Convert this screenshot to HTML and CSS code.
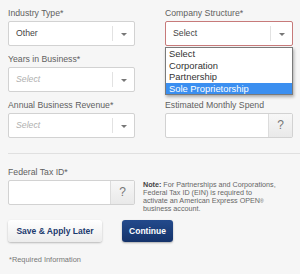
FILE: index.html
```html
<!DOCTYPE html>
<html lang="en">
<head>
    <meta charset="UTF-8">
    <meta name="viewport" content="width=device-width, initial-scale=1.0">
    <title>Business Information</title>
    <link rel="stylesheet" href="styles.css">
</head>
<body>
    <form class="business-form">
        <div class="columns">
            <div class="column">
                <div class="field">
                    <label>Industry Type*</label>
                    <div class="select-box">
                        <span class="value">Other</span>
                        <span class="arrow"></span>
                    </div>
                </div>
                <div class="field">
                    <label>Years in Business*</label>
                    <div class="select-box">
                        <span class="value placeholder">Select</span>
                        <span class="arrow"></span>
                    </div>
                </div>
                <div class="field">
                    <label>Annual Business Revenue*</label>
                    <div class="select-box">
                        <span class="value placeholder">Select</span>
                        <span class="arrow"></span>
                    </div>
                </div>
            </div>
            <div class="column right">
                <div class="field">
                    <label>Company Structure*</label>
                    <div class="select-box error open">
                        <span class="value">Select</span>
                        <span class="arrow"></span>
                        <ul class="options">
                            <li>Select</li>
                            <li>Corporation</li>
                            <li>Partnership</li>
                            <li class="active">Sole Proprietorship</li>
                        </ul>
                    </div>
                </div>
                <div class="field spacer"></div>
                <div class="field">
                    <label>Estimated Monthly Spend</label>
                    <div class="input-box">
                        <span class="input"></span>
                        <span class="help">?</span>
                    </div>
                </div>
            </div>
        </div>

        <hr class="divider">

        <div class="tax-row">
            <div class="field tax">
                <label>Federal Tax ID*</label>
                <div class="input-box">
                    <span class="input"></span>
                    <span class="help">?</span>
                </div>
            </div>
            <p class="note"><b>Note:</b> For Partnerships and Corporations, Federal Tax ID (EIN) is required to activate an American Express OPEN<span class="reg">&reg;</span> business account.</p>
        </div>

        <div class="actions">
            <button type="button" class="btn-secondary">Save &amp; Apply Later</button>
            <button type="button" class="btn-primary">Continue</button>
        </div>

        <p class="required">*Required Information</p>
    </form>
</body>
</html>
```

FILE: styles.css
```css
body {
    margin: 0;
    font-family: "Liberation Sans", Arial, sans-serif;
    background-color: #f6f6f6;
    color: #555;
}

.business-form {
    padding: 8px 0 0 8px;
}

.columns {
    display: flex;
    gap: 30px;
}

.column {
    width: 127px;
}

.column.right {
    width: 128px;
}

.field {
    margin-bottom: 8px;
}

.field.spacer {
    height: 38px;
}

.field label {
    display: block;
    height: 13px;
    font-size: 8.7px;
    line-height: 11px;
    color: #5f5f5f;
}

.select-box,
.input-box {
    position: relative;
    display: flex;
    height: 25px;
    box-sizing: border-box;
    border: 1px solid #d2d2d2;
    border-radius: 2px;
    background-color: #fff;
}

.select-box .value {
    flex: 1;
    padding-left: 7px;
    font-size: 8.7px;
    line-height: 23px;
    color: #444;
}

.select-box .value.placeholder {
    font-style: italic;
    color: #b0b0b0;
}

.select-box .arrow {
    width: 21px;
    margin: 4px 0;
    border-left: 1px solid #e2e2e2;
    position: relative;
}

.select-box .arrow::after {
    content: "";
    position: absolute;
    left: 8px;
    top: 7px;
    border-left: 3px solid transparent;
    border-right: 3px solid transparent;
    border-top: 3px solid #777;
}

.select-box.error {
    border-color: #c77a7a;
}

.options {
    position: absolute;
    top: 25px;
    left: -1px;
    width: 126px;
    margin: 0;
    padding: 0;
    list-style: none;
    background-color: #fff;
    border: 1px solid #7a7a7a;
    box-shadow: 1px 2px 3px rgba(0, 0, 0, 0.3);
    z-index: 2;
}

.options li {
    height: 11.5px;
    padding-left: 3px;
    font-size: 9.4px;
    line-height: 11.5px;
    color: #333;
}

.options li.active {
    background-color: #3b8ff0;
    color: #fff;
}

.input-box .input {
    flex: 1;
}

.input-box .help {
    width: 23px;
    border-left: 1px solid #dcdcdc;
    background: linear-gradient(#f7f7f7, #e9e9e9);
    text-align: center;
    font-size: 12px;
    line-height: 23px;
    color: #777;
}

.divider {
    margin: 7px 0 13px 0;
    border: none;
    border-top: 1px solid #e0e0e0;
}

.tax-row {
    display: flex;
    align-items: flex-start;
    gap: 8px;
}

.tax-row .field {
    width: 127px;
    margin-bottom: 0;
}

.note {
    width: 134px;
    margin: 0 0 -8px 0;
    padding-top: 14px;
    font-size: 7.2px;
    line-height: 8px;
    color: #666;
}

.note b {
    color: #444;
}

.note .reg {
    font-size: 5px;
    vertical-align: top;
}

.actions {
    display: flex;
    gap: 20px;
    margin-top: 15px;
}

.actions button {
    height: 22px;
    border: none;
    border-radius: 3px;
    font-family: "Liberation Sans", Arial, sans-serif;
    font-size: 8.5px;
    font-weight: bold;
    cursor: pointer;
}

.btn-secondary {
    width: 94px;
    background: linear-gradient(#ffffff, #ececec);
    color: #1c3a6e;
    box-shadow: 0 1px 2px rgba(0, 0, 0, 0.25);
}

.btn-primary {
    width: 51px;
    background: linear-gradient(#234a8c, #15336a);
    color: #fff;
    box-shadow: 0 1px 2px rgba(0, 0, 0, 0.3);
}

.required {
    margin: 13px 0 0 1px;
    font-size: 7.4px;
    color: #777;
}
```
